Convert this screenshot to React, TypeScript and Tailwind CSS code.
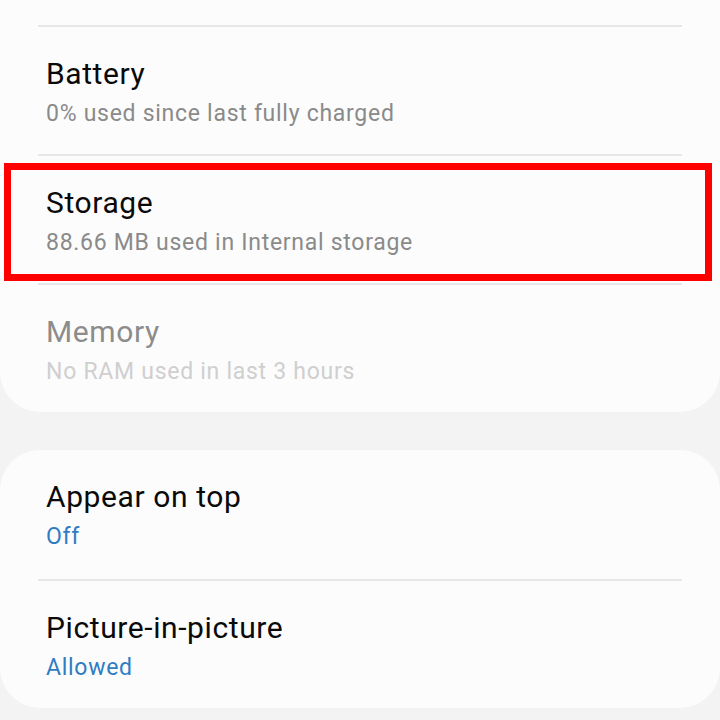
interface RowProps {
    title: string;
    subtitle: string;
    titleClass?: string;
    subtitleClass?: string;
    divider?: boolean;
    height?: string;
}

function Row({ title, subtitle, titleClass = "text-[#0a0a0a]", subtitleClass = "text-[#8a8a8a]", divider = true, height = "h-[127px]" }: RowProps) {
    return (
        <div>
            {divider && <div className="mx-[38px] h-[2px] bg-[#e7e7e7]" />}
            <div className={`${height} px-[46px] pt-[27px]`}>
                <p className={`text-[30px] leading-[40px] tracking-[0.6px] ${titleClass}`}>{title}</p>
                <p className={`mt-[2px] text-[23px] leading-[36px] tracking-[0.72px] ${subtitleClass}`}>{subtitle}</p>
            </div>
        </div>
    );
}

export default function App() {
    return (
        <div className="relative w-[720px] h-[720px] overflow-hidden bg-[#f3f3f3] font-['Roboto',sans-serif]">
            <div className="bg-[#fcfcfc] rounded-b-[40px] pt-[25px]">
                <Row title="Battery" subtitle="0% used since last fully charged" />
                <Row title="Storage" subtitle="88.66 MB used in Internal storage" />
                <Row
                    title="Memory"
                    subtitle="No RAM used in last 3 hours"
                    titleClass="text-[#8c8c8c]"
                    subtitleClass="text-[#cfcfcf]"
                />
            </div>

            <div className="mt-[38px] bg-[#fcfcfc] rounded-[40px]">
                <Row title="Appear on top" subtitle="Off" subtitleClass="text-[#2f7cc3]" divider={false} height="h-[129px]" />
                <Row title="Picture-in-picture" subtitle="Allowed" subtitleClass="text-[#2f7cc3]" />
            </div>

            {/* highlight annotation */}
            <div className="absolute left-[4px] top-[163px] w-[708px] h-[118px] border-[7px] border-[#ff0000]" />
        </div>
    );
}
